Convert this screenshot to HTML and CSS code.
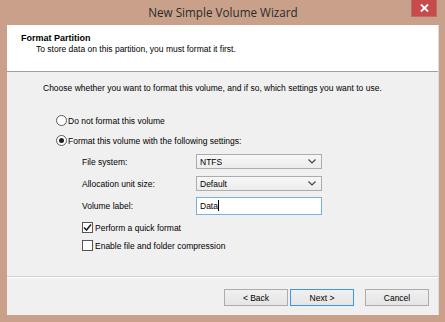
FILE: index.html
```html
<!DOCTYPE html>
<html>
<head>
<meta charset="utf-8">
<link rel="stylesheet" href="styles.css">
</head>
<body>
<div class="window">
  <div class="titlebar">
    <span class="title">New Simple Volume Wizard</span>
    <div class="close"><svg width="9" height="8" viewBox="0 0 9 8"><path d="M1 0.5 L8 7.5 M8 0.5 L1 7.5" stroke="#fff" stroke-width="1.8"/></svg></div>
  </div>
  <div class="client">
    <div class="header">
      <div class="h-title">Format Partition</div>
      <div class="h-sub">To store data on this partition, you must format it first.</div>
    </div>
    <div class="body">
      <div class="intro">Choose whether you want to format this volume, and if so, which settings you want to use.</div>
      <div class="radios">
        <label class="radio-row"><span class="radio"></span>Do not format this volume</label>
        <label class="radio-row"><span class="radio checked"></span>Format this volume with the following settings:</label>
      </div>
      <div class="settings">
        <div class="field"><span class="lbl">File system:</span><div class="combo"><span>NTFS</span><svg class="chev" width="8" height="5" viewBox="0 0 8 5"><path d="M0.5 0.5 L4 4 L7.5 0.5" fill="none" stroke="#444" stroke-width="1.2"/></svg></div></div>
        <div class="field"><span class="lbl">Allocation unit size:</span><div class="combo"><span>Default</span><svg class="chev" width="8" height="5" viewBox="0 0 8 5"><path d="M0.5 0.5 L4 4 L7.5 0.5" fill="none" stroke="#444" stroke-width="1.2"/></svg></div></div>
        <div class="field"><span class="lbl">Volume label:</span><div class="textbox"><span>Data</span><span class="caret"></span></div></div>
        <div class="checks">
          <label class="check-row"><span class="check"><svg width="9" height="9" viewBox="0 0 9 9"><path d="M1 4.5 L3.5 7 L8 1.5" fill="none" stroke="#222" stroke-width="1.6"/></svg></span>Perform a quick format</label>
          <label class="check-row"><span class="check"></span>Enable file and folder compression</label>
        </div>
      </div>
    </div>
    <div class="footer">
      <button class="btn">&lt; Back</button>
      <button class="btn default">Next &gt;</button>
      <button class="btn cancel">Cancel</button>
    </div>
  </div>
</div>
</body>
</html>
```
FILE: styles.css
```css
* { box-sizing: border-box; }
html, body { margin: 0; padding: 0; }
body { width: 445px; height: 322px; overflow: hidden; background: #c9a18a; }
.window {
  width: 445px; height: 322px;
  background: #c9a18a;
  padding: 0 6px 7px 7px;
  display: flex; flex-direction: column;
  font-family: "Liberation Sans", Arial, sans-serif;
  font-size: 8.5px;
  color: #000;
}
.titlebar {
  height: 25px; position: relative;
  display: flex; align-items: center; justify-content: center;
}
.title {
  font-family: "Open Sans", "Noto Sans", sans-serif;
  font-size: 11.7px; color: #2a2a2a;
  margin-top: -1px;
}
.close {
  position: absolute; top: 0; right: 2px;
  width: 26px; height: 17px;
  background: #c74b4b;
  border: 1px solid #b5706a; border-top: none;
  display: flex; align-items: center; justify-content: center;
}
.client {
  flex: 1;
  background: #f0f0f0;
  border-right: 1px solid #ddd;
  display: flex; flex-direction: column;
}
.header {
  height: 47px; background: #fff;
  border-bottom: 1px solid #a0a0a0;
  padding: 8px 0 0 14px;
}
.h-title { font-weight: bold; font-size: 9px; line-height: 11px; }
.h-sub { margin-left: 15px; line-height: 11px; }
.body { flex: 1; padding: 11px 0 0 36px; border-bottom: 1px solid #d0d0d0; box-shadow: 0 1px 0 #fff; }
.intro { line-height: 11px; }
.radios { margin-top: 21px; display: flex; flex-direction: column; gap: 9px; margin-left: 13px; }
.radio-row { display: flex; align-items: center; height: 11px; }
.radio {
  width: 11px; height: 11px; border-radius: 50%;
  border: 1px solid #5a5a5a; background: #fff; margin-right: 1px;
  display: flex; align-items: center; justify-content: center;
}
.radio.checked::after { content: ""; width: 5px; height: 5px; border-radius: 50%; background: #222; }
.settings { margin-left: 39px; margin-top: 7px; }
.field { display: flex; align-items: center; height: 17px; margin-bottom: 5px; }
.lbl { width: 114px; }
.combo {
  width: 126px; height: 15px;
  border: 1px solid #acacac;
  background: linear-gradient(#f7f7f7, #ececec);
  display: flex; align-items: center; justify-content: space-between;
  padding: 0 5px 0 3px;
}
.textbox {
  width: 126px; height: 18px;
  border: 1px solid #7ab0e0;
  background: #fff;
  display: flex; align-items: center; padding: 0 3px;
}
.caret { width: 1px; height: 11px; background: #000; margin-left: 0; }
.checks { margin-top: 8px; display: flex; flex-direction: column; gap: 7px; }
.check-row { display: flex; align-items: center; height: 11px; }
.check {
  width: 11px; height: 11px; border: 1px solid #555; background: #fff; margin-right: 2px;
  display: flex; align-items: center; justify-content: center;
}
.footer {
  height: 38px;
  display: flex; align-items: flex-start; justify-content: flex-end;
  padding: 12px 9px 0 0;
}
.btn {
  font-family: "Liberation Sans", Arial, sans-serif; font-size: 8.5px; color: #000;
  width: 64px; height: 17px; padding: 0; margin: 0;
  border: 1px solid #acacac;
  background: linear-gradient(#f0f0f0, #e5e5e5);
  margin-left: 2px;
}
.btn.default { border-color: #3c96f0; }
.btn.cancel { margin-left: 11px; }
```
